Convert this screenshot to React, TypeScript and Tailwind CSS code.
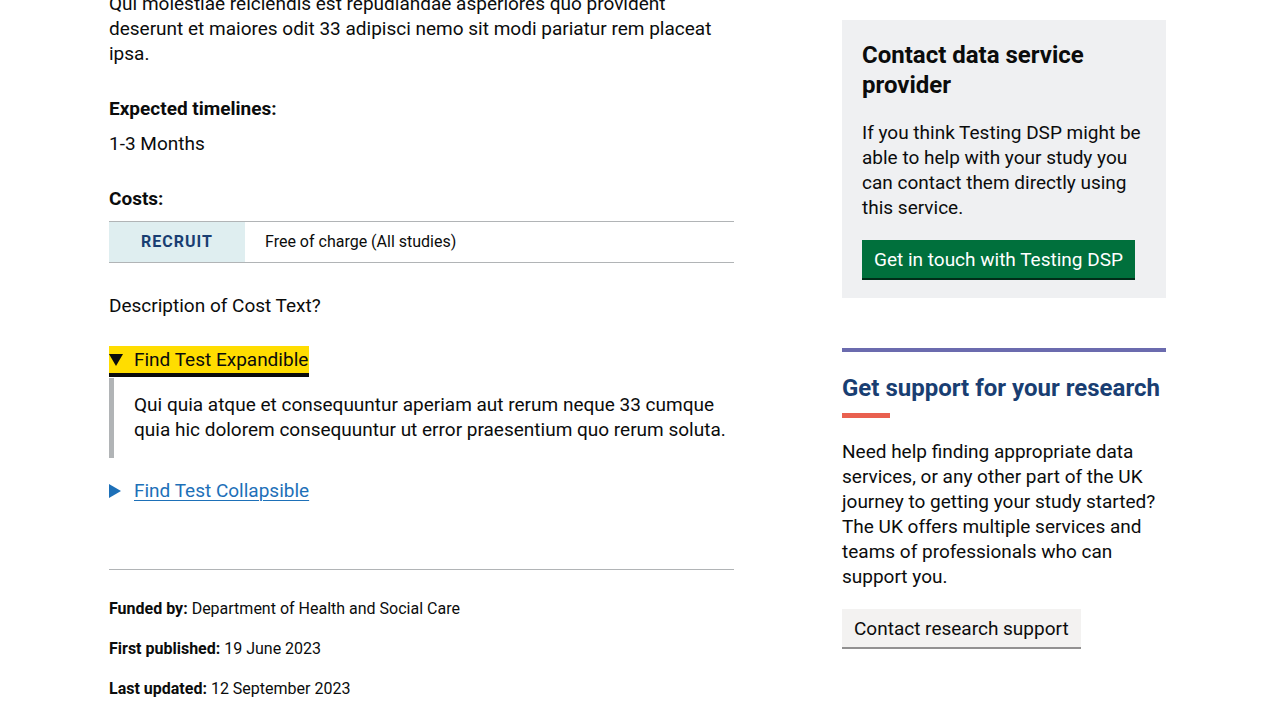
import React from 'react'

const font = { fontFamily: 'Roboto, "Noto Sans", sans-serif' }

const Meta = ({ label, value }: { label: string; value: string }) => (
    <p className="text-[16px] leading-[20px] text-[#0b0c0c]">
        <span className="font-bold">{label}</span> {value}
    </p>
)

const App = () => {
    return (
        <div className="w-[1280px] h-[720px] overflow-hidden bg-white text-[#0b0c0c]" style={font}>
            <div className="flex pl-[109px] gap-[108px] -mt-[9px]">
                {/* MAIN COLUMN */}
                <div className="w-[625px] flex flex-col">
                    <p className="text-[19px] leading-[25px]">
                        Qui molestiae reiciendis est repudiandae asperiores quo provident deserunt et maiores odit 33 adipisci nemo sit modi pariatur rem placeat ipsa.
                    </p>

                    <h3 className="mt-[30px] text-[19px] leading-[25px] font-bold">Expected timelines:</h3>
                    <p className="mt-[10px] text-[19px] leading-[25px]">1-3 Months</p>

                    <h3 className="mt-[30px] text-[19px] leading-[25px] font-bold">Costs:</h3>
                    <div className="mt-[10px] flex border-y border-[#b1b4b6]">
                        <div className="w-[136px] h-[40px] flex items-center justify-center bg-[#dfeef0] text-[16px] font-bold tracking-[1px] text-[#193e72]">
                            RECRUIT
                        </div>
                        <div className="flex items-center pl-[20px] text-[16px]">Free of charge (All studies)</div>
                    </div>

                    <p className="mt-[30px] text-[19px] leading-[25px]">Description of Cost Text?</p>

                    {/* EXPANDED DETAILS */}
                    <div className="mt-[28px]">
                        <div className="inline-flex items-center bg-[#ffdd00] border-b-4 border-[#0b0c0c] h-[31px] pr-[1px]">
                            <span className="w-[25px] flex">
                                <svg width="14" height="12" viewBox="0 0 14 12">
                                    <path d="M0 0h14L7 12z" fill="#0b0c0c" />
                                </svg>
                            </span>
                            <span className="text-[19px] leading-[25px]">Find Test Expandible</span>
                        </div>
                        <div className="mt-px border-l-[5px] border-[#b1b4b6] pl-[20px] pt-[14px] pb-[16px]">
                            <p className="text-[19px] leading-[25px]">
                                Qui quia atque et consequuntur aperiam aut rerum neque 33 cumque quia hic dolorem consequuntur ut error praesentium quo rerum soluta.
                            </p>
                        </div>
                    </div>

                    {/* COLLAPSED DETAILS */}
                    <div className="mt-[20px] flex items-center text-[#1d70b8]">
                        <span className="w-[25px] flex">
                            <svg width="12" height="14" viewBox="0 0 12 14">
                                <path d="M0 0l12 7L0 14z" fill="#1d70b8" />
                            </svg>
                        </span>
                        <span className="text-[19px] leading-[25px] underline underline-offset-[3px] decoration-1">Find Test Collapsible</span>
                    </div>

                    <hr className="mt-[66px] border-t border-[#b1b4b6]" />

                    <div className="mt-[29px] flex flex-col gap-[20px]">
                        <Meta label="Funded by:" value="Department of Health and Social Care" />
                        <Meta label="First published:" value="19 June 2023" />
                        <Meta label="Last updated:" value="12 September 2023" />
                    </div>
                </div>

                {/* SIDEBAR */}
                <aside className="w-[324px] pt-[29px] flex flex-col">
                    <div className="bg-[#eff0f2] px-[20px] pt-[20px] pb-[20px]">
                        <h2 className="text-[24px] leading-[30px] font-bold">Contact data service provider</h2>
                        <p className="mt-[20px] text-[19px] leading-[25px]">
                            If you think Testing DSP might be able to help with your study you can contact them directly using this service.
                        </p>
                        <button className="mt-[20px] bg-[#00703c] text-white text-[19px] leading-[25px] px-[12px] pt-[7px] pb-[6px] shadow-[0_2px_0_#002d18]">
                            Get in touch with Testing DSP
                        </button>
                    </div>

                    <div className="mt-[50px] border-t-4 border-[#6b6bae]">
                        <h2 className="mt-[21px] text-[24px] leading-[30px] font-bold text-[#193e72]">Get support for your research</h2>
                        <div className="mt-[10px] w-[48px] h-[5px] bg-[#e9604f]" />
                        <p className="mt-[21px] text-[19px] leading-[25px]">
                            Need help finding appropriate data services, or any other part of the UK journey to getting your study started? The UK offers multiple services and teams of professionals who can support you.
                        </p>
                        <button className="mt-[20px] bg-[#f3f2f1] text-[#0b0c0c] text-[19px] leading-[25px] px-[12px] pt-[7px] pb-[6px] shadow-[0_2px_0_#929191]">
                            Contact research support
                        </button>
                    </div>
                </aside>
            </div>
        </div>
    )
}

export default App
